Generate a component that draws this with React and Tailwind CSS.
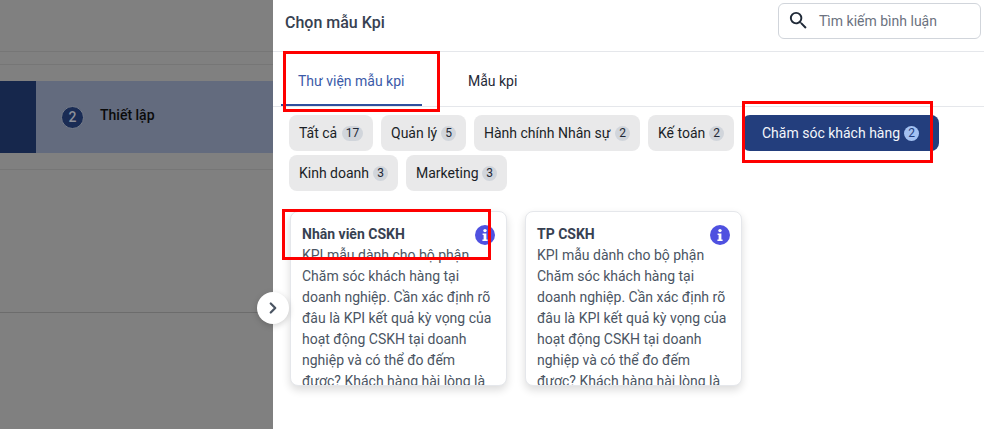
import { ChevronRight } from 'lucide-react'
import { MdSearch } from 'react-icons/md'

const chips = [
  { label: 'Tất cả', count: 17, width: 'w-[84px]' },
  { label: 'Quản lý', count: 5, width: 'w-[85px]' },
  { label: 'Hành chính Nhân sự', count: 2, width: 'w-[166px]' },
  { label: 'Kế toán', count: 2, width: 'w-[86px]' },
  { label: 'Chăm sóc khách hàng', count: 2, active: true, width: 'w-[197px]' },
  { label: 'Kinh doanh', count: 3, width: 'w-[109px]' },
  { label: 'Marketing', count: 3, width: 'w-[101px]' },
]

const cards = ['Nhân viên CSKH', 'TP CSKH']

const body =
  'KPI mẫu dành cho bộ phận Chăm sóc khách hàng tại doanh nghiệp. Cần xác định rõ đâu là KPI kết quả kỳ vọng của hoạt động CSKH tại doanh nghiệp và có thể đo đếm được? Khách hàng hài lòng là gì và làm thế nào để đo lường?'

const Chip = ({ label, count, active, width }) => (
  <div
    className={`flex h-9 items-center justify-between rounded-lg ${width} ${
      active ? 'bg-[#233e7d] pl-[20px] pr-[20px] text-[#f3f6fb]' : 'bg-[#e9e9ea] pl-[10px] pr-[10px] text-[#1b1f27]'
    }`}
  >
    <span>{label}</span>
    <span
      className={`flex h-[15px] items-center justify-center rounded-full text-xs ${
        count > 9 ? 'w-[21px]' : 'w-[15px]'
      } ${active ? 'bg-[#a3c1f2] text-[#233e7d]' : 'bg-[#d1d5db] text-[#1f2937]'}`}
    >
      {count}
    </span>
  </div>
)

const InfoIcon = () => (
  <svg viewBox="0 0 20 20" className="absolute right-[11px] top-[13px] h-5 w-5">
    <circle cx="10" cy="10" r="10" fill="#4f51e0" />
    <circle cx="10" cy="5.6" r="1.7" fill="#fff" />
    <path d="M7.6 8.4h3.8v6h1.2v1.6H7.4v-1.6h1.2V10h-1z" fill="#fff" />
  </svg>
)

const Card = ({ title }) => (
  <div className="relative h-[175px] w-[217px] overflow-hidden rounded-lg border border-[#e5e7eb] bg-white pl-[11px] pr-3 pt-[12px] shadow-[0_4px_8px_rgba(0,0,0,0.14)]">
    <InfoIcon />
    <h3 className="text-sm font-bold leading-[21px] text-[#374151]">{title}</h3>
    <p className="text-sm leading-[21px] text-[#4b5563]">{body}</p>
  </div>
)

export default function App() {
  return (
    <div className="relative flex h-[429px] w-[984px] overflow-hidden font-['Roboto',sans-serif] text-sm">
      {/* trang nền bị phủ mờ */}
      <div className="flex w-[273px] shrink-0 flex-col bg-[#808080]">
        <div className="h-[52px] shrink-0 border-b border-[#767676]" />
        <div className="h-[13px] shrink-0 border-b border-[#767676]" />
        <div className="mt-4 flex h-[72px] shrink-0 items-center bg-[#636b7e]">
          <div className="h-full w-9 bg-[#16274c]" />
          <div className="ml-[25px] flex h-[23px] w-[23px] items-center justify-center rounded-full border border-[#777d8a] bg-[#1a2c55] text-sm font-medium text-[#8b8f99]">
            2
          </div>
          <span className="ml-[16px] -translate-y-0.5 font-medium text-[#0a0a0a]">Thiết lập</span>
        </div>
        <div className="h-[17px] shrink-0 border-b border-[#767676]" />
        <div className="h-[143px] shrink-0 border-b border-[#6c6c6c]" />
      </div>

      <div className="flex min-w-0 flex-1 flex-col bg-white">
        <div className="flex h-[52px] shrink-0 items-start justify-between border-b border-[#e5e7eb] pl-3 pr-[3px]">
          <h2 className="mt-[13px] text-base font-medium leading-5 text-[#374151]">Chọn mẫu Kpi</h2>
          <div className="mt-[3px] flex h-[36px] w-[203px] items-center rounded-md border border-[#d1d5db] pl-[8px]">
            <MdSearch size={23} className="-translate-y-px text-[#1f2937]" />
            <span className="ml-[9px] text-[#6b7280]">Tìm kiếm bình luận</span>
          </div>
        </div>

        <div className="flex h-[55px] shrink-0 border-b border-[#e5e7eb] pl-2">
          <div className="flex w-[141px] items-center border-b-2 border-[#2f4f9e] pl-[17px] pt-[5px] text-[#3b5aa8]">
            Thư viện mẫu kpi
          </div>
          <div className="ml-[46px] flex items-center pt-[3px] text-[#1f2937]">Mẫu kpi</div>
        </div>

        <div className="mt-2 flex flex-wrap gap-x-2 gap-y-1 pl-4 pr-[40px]">
          {chips.map((c) => (
            <Chip key={c.label} {...c} />
          ))}
        </div>

        <div className="mt-[20px] flex gap-[18px] pl-[17px]">
          {cards.map((t) => (
            <Card key={t} title={t} />
          ))}
        </div>
      </div>

      <button className="absolute left-[257px] top-[292px] flex h-8 w-8 items-center justify-center rounded-full bg-white shadow-[0_2px_6px_rgba(0,0,0,0.18)]">
        <ChevronRight size={18} strokeWidth={3} className="text-[#4b5563]" />
      </button>

      {/* khung đỏ chú thích */}
      <div className="absolute left-[283px] top-[51px] h-[61px] w-[157px] border-[3px] border-[#fe0000]" />
      <div className="absolute left-[742px] top-[101px] h-[62px] w-[191px] border-[3px] border-[#fe0000]" />
      <div className="absolute left-[282px] top-[209px] h-[51px] w-[209px] border-[3px] border-[#fe0000]" />
    </div>
  )
}
